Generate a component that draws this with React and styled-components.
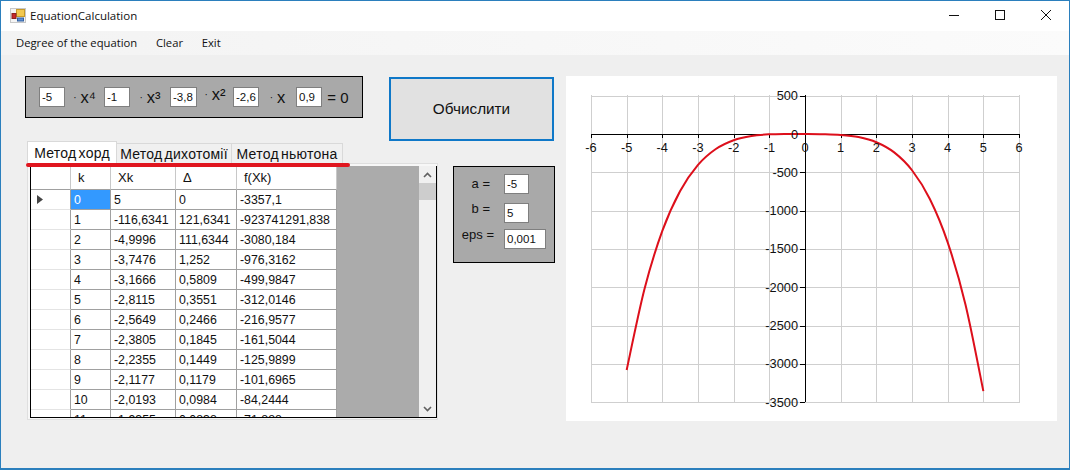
import React from 'react';
import styled, { createGlobalStyle } from 'styled-components';

const GlobalStyle = createGlobalStyle`
  html, body { margin: 0; padding: 0; background: #efefef; }
  * { box-sizing: border-box; }
`;

const Window = styled.div`
  width: 1070px;
  height: 470px;
  display: flex;
  flex-direction: column;
  border: 1px solid #2b7fbd;
  border-bottom-width: 2px;
  background: #efefef;
  font-family: "Liberation Sans", Arial, sans-serif;
  color: #111;
  overflow: hidden;
`;

const TitleBar = styled.div`
  height: 30px;
  flex: none;
  display: flex;
  align-items: center;
  background: #fff;
  padding: 0 0 2px 9px;
  font-family: "Open Sans", sans-serif;
  font-size: 11.5px;
`;

const TitleText = styled.span`
  margin-left: 4px;
  flex: 1;
`;

const WinButton = styled.div`
  width: 46px;
  height: 28px;
  display: flex;
  align-items: center;
  justify-content: center;
`;

const MenuBar = styled.div`
  height: 24px;
  flex: none;
  display: flex;
  align-items: center;
  padding: 0 0 1px 15px;
  gap: 18.7px;
  background: linear-gradient(90deg, #f3f3f3, #fbfbfb);
  font-family: "Open Sans", sans-serif;
  font-size: 11.25px;
`;

const Content = styled.div`
  flex: 1;
  display: flex;
  padding: 21px 0 0 24px;
  gap: 11px;
`;

const LeftSide = styled.div`
  width: 530px;
  display: flex;
  flex-direction: column;
`;

const TopRow = styled.div`
  height: 65px;
  display: flex;
  align-items: flex-start;
  gap: 26px;
`;

const EquationPanel = styled.div`
  width: 338px;
  height: 42px;
  display: flex;
  align-items: center;
  padding-left: 13px;
  background: #a9a9a9;
  border: 1px solid #000;
`;

const NumberBox = styled.div`
  width: ${p => p.$w || 26}px;
  height: ${p => p.$h || 20}px;
  flex: none;
  display: flex;
  align-items: center;
  padding-left: 2px;
  background: #fff;
  border: 1px solid #7f7f7f;
  font-size: 11.5px;
`;

const Term = styled.div`
  width: ${p => p.$w}px;
  flex: none;
  display: flex;
  align-items: center;
  justify-content: center;
  font-size: ${p => p.$size || 16.5}px;
  white-space: pre;
  transform: translateY(${p => p.$lift || 0}px);
`;

const Dot = styled.span`
  font-size: 10px;
  margin-right: 4px;
`;

const CalcButton = styled.div`
  width: 165px;
  height: 64px;
  margin-top: 1px;
  display: flex;
  align-items: center;
  justify-content: center;
  background: #e1e1e1;
  border: 2px solid #0f78c8;
  font-size: 15.3px;
`;

const BottomRow = styled.div`
  display: flex;
  align-items: flex-start;
  gap: 15px;
  padding-left: 2px;
`;

const TabBlock = styled.div`
  position: relative;
  width: 411px;
`;

const TabStrip = styled.div`
  height: 22px;
  display: flex;
  align-items: flex-end;
`;

const Tab = styled.div`
  width: ${p => p.$w}px;
  height: ${p => (p.$active ? 22 : 20)}px;
  display: flex;
  align-items: center;
  justify-content: center;
  background: ${p => (p.$active ? '#fff' : '#f0f0f0')};
  border: 1px solid #d9d9d9;
  border-bottom: none;
  border-left-width: ${p => (p.$active ? 1 : 0)}px;
  font-size: 14px;
  letter-spacing: 0.25px;
  word-spacing: -2px;
  white-space: nowrap;
`;

const RedLine = styled.div`
  position: absolute;
  left: -1px;
  top: 22px;
  width: 324px;
  height: 4px;
  border-radius: 2px;
  background: #e0161f;
`;

const TabPage = styled.div`
  height: 257px;
  padding: 2px 0 2px 2px;
  background: #f7f7f7;
  border: 1px solid #dfdfdf;
`;

const GridFrame = styled.div`
  height: 252px;
  display: flex;
  border: 1px solid #000;
  border-top: none;
  background: #ababab;
  overflow: hidden;
`;

const GridTable = styled.div`
  width: 306px;
  flex: none;
  align-self: flex-start;
  display: grid;
  grid-template-columns: 40px 40px 65px 61px 100px;
  grid-template-rows: 24px;
  grid-auto-rows: 20px;
  background: #fff;
  font-size: 12.35px;
`;

const HeadCell = styled.div`
  display: flex;
  align-items: center;
  padding-left: 7px;
  border-right: 1px solid #c8c8c8;
  border-bottom: 1px solid #a0a0a0;
  font-size: 13px;
`;

const RowHeader = styled.div`
  display: flex;
  align-items: center;
  padding-left: 6px;
  border-right: 1px solid #a0a0a0;
  border-bottom: 1px solid #e4e4e4;
`;

const Cell = styled.div`
  display: flex;
  align-items: center;
  padding-left: 3px;
  white-space: nowrap;
  background: ${p => (p.$selected ? '#3399ff' : '#fff')};
  color: ${p => (p.$selected ? '#fff' : '#111')};
  border-right: 1px solid #a0a0a0;
  border-bottom: 1px solid #a0a0a0;
`;

const ScrollSpacer = styled.div`
  width: 82px;
  flex: none;
`;

const ScrollBar = styled.div`
  width: 17px;
  flex: none;
  display: flex;
  flex-direction: column;
  background: #f0f0f0;
`;

const ScrollArrow = styled.div`
  height: 17px;
  flex: none;
  display: flex;
  align-items: center;
  justify-content: center;
`;

const ScrollThumb = styled.div`
  height: 17px;
  flex: none;
  background: #cdcdcd;
`;

const ScrollTrack = styled.div`
  flex: 1;
`;

const RangePanel = styled.div`
  width: 102px;
  height: 97px;
  margin-top: 25px;
  display: flex;
  flex-direction: column;
  padding-top: 7px;
  background: #a9a9a9;
  border: 1px solid #000;
  font-size: 13px;
`;

const RangeRow = styled.div`
  display: flex;
  align-items: center;
  margin-bottom: ${p => p.$gap}px;
`;

const RangeLabel = styled.div`
  width: 50px;
  flex: none;
  text-align: right;
  padding-right: ${p => p.$pad}px;
  margin-top: ${p => p.$up}px;
`;

const ChartPanel = styled.div`
  width: 491px;
  height: 345px;
  background: #fff;
`;

const coefficients = ['-5', '-1', '-3,8', '-2,6', '0,9'];

const rows = [
  ['0', '5', '0', '-3357,1'],
  ['1', '-116,6341', '121,6341', '-923741291,838'],
  ['2', '-4,9996', '111,6344', '-3080,184'],
  ['3', '-3,7476', '1,252', '-976,3162'],
  ['4', '-3,1666', '0,5809', '-499,9847'],
  ['5', '-2,8115', '0,3551', '-312,0146'],
  ['6', '-2,5649', '0,2466', '-216,9577'],
  ['7', '-2,3805', '0,1845', '-161,5044'],
  ['8', '-2,2355', '0,1449', '-125,9899'],
  ['9', '-2,1177', '0,1179', '-101,6965'],
  ['10', '-2,0193', '0,0984', '-84,2444'],
  ['11', '-1,9355', '0,0838', '-71,888'],
];

const px = x => 239 + x * 35.67;
const py = y => 58 - y * 0.0766;
const f = x => -5 * x ** 4 - x ** 3 - 3.8 * x ** 2 - 2.6 * x + 0.9;

function curvePath() {
  const pts = [];
  for (let x = -5; x <= 5.001; x += 0.5) pts.push([px(x), py(f(x))]);
  let d = `M${pts[0][0]} ${pts[0][1]}`;
  for (let i = 0; i < pts.length - 1; i++) {
    const p0 = pts[Math.max(i - 1, 0)];
    const p1 = pts[i];
    const p2 = pts[i + 1];
    const p3 = pts[Math.min(i + 2, pts.length - 1)];
    const c1x = p1[0] + (p2[0] - p0[0]) / 6;
    const c1y = p1[1] + (p2[1] - p0[1]) / 6;
    const c2x = p2[0] - (p3[0] - p1[0]) / 6;
    const c2y = p2[1] - (p3[1] - p1[1]) / 6;
    d += ` C${c1x} ${c1y} ${c2x} ${c2y} ${p2[0]} ${p2[1]}`;
  }
  return d;
}

function Chart() {
  const xs = [-6, -5, -4, -3, -2, -1, 0, 1, 2, 3, 4, 5, 6];
  const ys = [500, 0, -500, -1000, -1500, -2000, -2500, -3000, -3500];
  const textStyle = { fontFamily: '"Liberation Sans", Arial, sans-serif', fontSize: 12.8, fill: '#111' };
  return (
    <svg width="491" height="345" viewBox="0 0 491 345">
      {xs.map(x => (
        <line key={x} x1={Math.round(px(x)) + 0.5} x2={Math.round(px(x)) + 0.5} y1="19" y2="326" stroke="#cfcfcf" />
      ))}
      {ys.map(y => (
        <line key={y} x1="25" x2="454" y1={Math.round(py(y)) + 0.5} y2={Math.round(py(y)) + 0.5} stroke="#cfcfcf" />
      ))}
      <line x1="25" x2="454" y1="58.5" y2="58.5" stroke="#000" />
      <line x1="239.5" x2="239.5" y1="19" y2="326" stroke="#000" />
      {xs.map(x => (
        <line key={x} x1={Math.round(px(x)) + 0.5} x2={Math.round(px(x)) + 0.5} y1="58" y2="62" stroke="#000" />
      ))}
      {ys.map(y => (
        <line key={y} x1="234" x2="239" y1={Math.round(py(y)) + 0.5} y2={Math.round(py(y)) + 0.5} stroke="#000" />
      ))}
      <path d={curvePath()} fill="none" stroke="#dd0f1b" strokeWidth="2" />
      {xs.map(x => (
        <text key={x} x={px(x)} y="76" textAnchor="middle" style={textStyle}>{x}</text>
      ))}
      {ys.map(y => (
        <text key={y} x="232" y={py(y) + 4.5} textAnchor="end" style={textStyle}>{y}</text>
      ))}
    </svg>
  );
}

function AppIcon() {
  return (
    <svg width="16" height="15" viewBox="0 0 16 15">
      <rect x="0.5" y="0.5" width="15" height="14" fill="#f4f4f4" stroke="#c8c8c8" />
      <rect x="6.5" y="1.5" width="8" height="7" fill="#f2c850" stroke="#c79a2a" />
      <rect x="2" y="5.5" width="4" height="5" fill="#c8272b" stroke="#8a2020" />
      <rect x="7.5" y="10" width="6" height="3" fill="#5c8fd8" stroke="#33609f" />
    </svg>
  );
}

function Chevron({ up }) {
  return (
    <svg width="9" height="6" viewBox="0 0 9 6">
      <path d={up ? 'M1 5L4.5 1.5L8 5' : 'M1 1L4.5 4.5L8 1'} fill="none" stroke="#606060" strokeWidth="1.6" />
    </svg>
  );
}

export default function App() {
  return (
    <>
      <GlobalStyle />
      <Window>
        <TitleBar>
          <AppIcon />
          <TitleText>EquationCalculation</TitleText>
          <WinButton>
            <svg width="10" height="10" viewBox="0 0 10 10"><path d="M0 5.5H10" stroke="#111" /></svg>
          </WinButton>
          <WinButton>
            <svg width="10" height="10" viewBox="0 0 10 10"><rect x="0.5" y="0.5" width="9" height="9" fill="none" stroke="#111" /></svg>
          </WinButton>
          <WinButton>
            <svg width="10" height="10" viewBox="0 0 10 10"><path d="M0 0L10 10M10 0L0 10" stroke="#111" /></svg>
          </WinButton>
        </TitleBar>
        <MenuBar>
          <span>Degree of the equation</span>
          <span>Clear</span>
          <span>Exit</span>
        </MenuBar>
        <Content>
          <LeftSide>
            <TopRow>
              <EquationPanel>
                <NumberBox>{coefficients[0]}</NumberBox>
                <Term $w={39}><Dot>·</Dot>x⁴</Term>
                <NumberBox>{coefficients[1]}</NumberBox>
                <Term $w={40}><Dot>·</Dot>x³</Term>
                <NumberBox $w={27}>{coefficients[2]}</NumberBox>
                <Term $w={36} $lift={-3}><Dot>·</Dot>x²</Term>
                <NumberBox>{coefficients[3]}</NumberBox>
                <Term $w={37}><Dot>·</Dot>x</Term>
                <NumberBox>{coefficients[4]}</NumberBox>
                <Term $w={32} $size={15}>= 0</Term>
              </EquationPanel>
              <CalcButton>Обчислити</CalcButton>
            </TopRow>
            <BottomRow>
              <TabBlock>
                <TabStrip>
                  <Tab $active $w={90}>Метод хорд</Tab>
                  <Tab $w={115}>Метод дихотомії</Tab>
                  <Tab $w={111}>Метод ньютона</Tab>
                </TabStrip>
                <RedLine />
                <TabPage>
                  <GridFrame>
                    <GridTable>
                      <HeadCell />
                      <HeadCell>k</HeadCell>
                      <HeadCell>Xk</HeadCell>
                      <HeadCell>Δ</HeadCell>
                      <HeadCell>f(Xk)</HeadCell>
                      {rows.map((row, i) => (
                        <React.Fragment key={row[0]}>
                          <RowHeader>
                            {i === 0 && (
                              <svg width="6" height="9" viewBox="0 0 6 9"><path d="M0 0L6 4.5L0 9Z" fill="#444" /></svg>
                            )}
                          </RowHeader>
                          {row.map((val, j) => (
                            <Cell key={j} $selected={i === 0 && j === 0}>{val}</Cell>
                          ))}
                        </React.Fragment>
                      ))}
                    </GridTable>
                    <ScrollSpacer />
                    <ScrollBar>
                      <ScrollArrow><Chevron up /></ScrollArrow>
                      <ScrollThumb />
                      <ScrollTrack />
                      <ScrollArrow><Chevron /></ScrollArrow>
                    </ScrollBar>
                  </GridFrame>
                </TabPage>
              </TabBlock>
              <RangePanel>
                <RangeRow $gap={9}>
                  <RangeLabel $pad={14} $up={-2}>a =</RangeLabel>
                  <NumberBox $w={25}>-5</NumberBox>
                </RangeRow>
                <RangeRow $gap={6}>
                  <RangeLabel $pad={14} $up={-10}>b =</RangeLabel>
                  <NumberBox $w={25}>5</NumberBox>
                </RangeRow>
                <RangeRow $gap={0}>
                  <RangeLabel $pad={10} $up={-10}>eps =</RangeLabel>
                  <NumberBox $w={42}>0,001</NumberBox>
                </RangeRow>
              </RangePanel>
            </BottomRow>
          </LeftSide>
          <ChartPanel>
            <Chart />
          </ChartPanel>
        </Content>
      </Window>
    </>
  );
}
